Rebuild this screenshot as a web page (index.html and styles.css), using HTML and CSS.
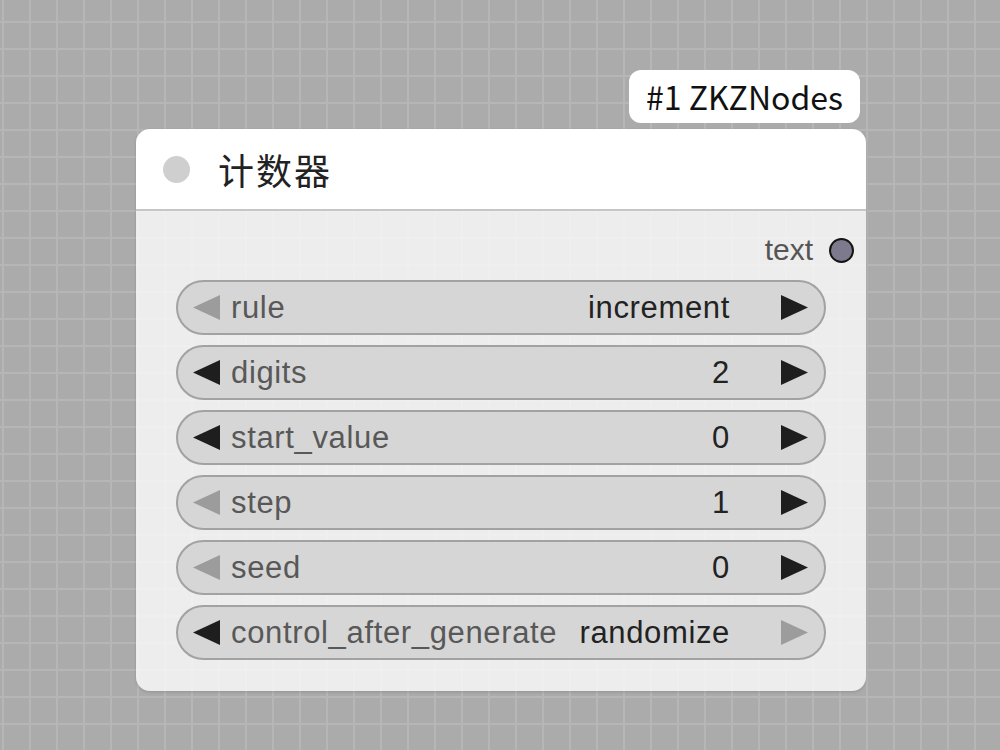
FILE: index.html
```html
<!DOCTYPE html>
<html lang="zh">
<head>
<meta charset="utf-8">
<title>计数器</title>
<link rel="stylesheet" href="styles.css">
</head>
<body>
<div class="canvas">
  <div class="node-wrap">
    <div class="badge">#1 ZKZNodes</div>
    <div class="node">
      <div class="node-title">
        <span class="dot"></span>
        <span class="title">计数器</span>
      </div>
      <div class="node-body">
        <div class="output">
          <span class="output-label">text</span>
          <span class="slot"></span>
        </div>
        <div class="widgets">
          <div class="widget">
            <svg class="arrow off" viewBox="0 0 27 25"><polygon points="0,12.5 27,0 27,25"/></svg>
            <span class="label">rule</span>
            <span class="value">increment</span>
            <svg class="arrow right" viewBox="0 0 27 25"><polygon points="27,12.5 0,0 0,25"/></svg>
          </div>
          <div class="widget">
            <svg class="arrow" viewBox="0 0 27 25"><polygon points="0,12.5 27,0 27,25"/></svg>
            <span class="label">digits</span>
            <span class="value">2</span>
            <svg class="arrow right" viewBox="0 0 27 25"><polygon points="27,12.5 0,0 0,25"/></svg>
          </div>
          <div class="widget">
            <svg class="arrow" viewBox="0 0 27 25"><polygon points="0,12.5 27,0 27,25"/></svg>
            <span class="label">start_value</span>
            <span class="value">0</span>
            <svg class="arrow right" viewBox="0 0 27 25"><polygon points="27,12.5 0,0 0,25"/></svg>
          </div>
          <div class="widget">
            <svg class="arrow off" viewBox="0 0 27 25"><polygon points="0,12.5 27,0 27,25"/></svg>
            <span class="label">step</span>
            <span class="value">1</span>
            <svg class="arrow right" viewBox="0 0 27 25"><polygon points="27,12.5 0,0 0,25"/></svg>
          </div>
          <div class="widget">
            <svg class="arrow off" viewBox="0 0 27 25"><polygon points="0,12.5 27,0 27,25"/></svg>
            <span class="label">seed</span>
            <span class="value">0</span>
            <svg class="arrow right" viewBox="0 0 27 25"><polygon points="27,12.5 0,0 0,25"/></svg>
          </div>
          <div class="widget">
            <svg class="arrow" viewBox="0 0 27 25"><polygon points="0,12.5 27,0 27,25"/></svg>
            <span class="label">control_after_generate</span>
            <span class="value">randomize</span>
            <svg class="arrow right off" viewBox="0 0 27 25"><polygon points="27,12.5 0,0 0,25"/></svg>
          </div>
        </div>
      </div>
    </div>
  </div>
</div>
</body>
</html>
```
FILE: styles.css
```css
html, body {
  margin: 0;
  padding: 0;
}

.canvas {
  width: 1000px;
  height: 750px;
  box-sizing: border-box;
  padding: 70px 0 0 136px;
  background-color: #ababab;
  background-image:
    linear-gradient(to right, #b6b6b6 0, #b6b6b6 2px, transparent 2px),
    linear-gradient(to bottom, #b6b6b6 0, #b6b6b6 2px, transparent 2px);
  background-size: 27px 27px;
  background-position: 2px 21px;
  overflow: hidden;
}

.node-wrap {
  width: 730px;
  display: flex;
  flex-direction: column;
}

.badge {
  align-self: flex-end;
  margin-right: 6px;
  margin-bottom: 6px;
  height: 53px;
  line-height: 53px;
  padding: 0 17px;
  background: #ffffff;
  border-radius: 12px;
  font-family: "Noto Sans CJK SC", "Noto Sans", sans-serif;
  font-size: 32px;
  color: #111111;
}

.node {
  height: 562px;
  border-radius: 14px;
  overflow: hidden;
  display: flex;
  flex-direction: column;
  box-shadow: 0 1px 3px rgba(0, 0, 0, 0.15);
}

.node-title {
  height: 80px;
  flex: none;
  background: #ffffff;
  border-bottom: 2px solid #c6c6c6;
  display: flex;
  align-items: center;
  padding-left: 27px;
}

.dot {
  width: 27px;
  height: 27px;
  border-radius: 50%;
  background: #cfcfcf;
  margin-right: 28px;
}

.title {
  font-family: "Noto Sans CJK SC", sans-serif;
  font-size: 36px;
  color: #222222;
  letter-spacing: 2px;
}

.node-body {
  flex: 1;
  background: rgba(255, 255, 255, 0.78);
  display: flex;
  flex-direction: column;
}

.output {
  margin-top: 24px;
  height: 30px;
  display: flex;
  justify-content: flex-end;
  align-items: center;
  padding-right: 12px;
}

.output-label {
  font-family: "Liberation Sans", Arial, sans-serif;
  font-size: 30px;
  line-height: 30px;
  color: #555555;
  margin-right: 16px;
}

.slot {
  width: 21px;
  height: 21px;
  border-radius: 50%;
  background: #7c7a8c;
  border: 2.5px solid #141414;
}

.widgets {
  margin-top: 15px;
  padding: 0 40px;
  display: flex;
  flex-direction: column;
  gap: 10px;
}

.widget {
  height: 55px;
  box-sizing: border-box;
  border: 2px solid #a2a2a2;
  border-radius: 28px;
  background: #d6d6d6;
  display: flex;
  align-items: center;
  padding: 0 16px 0 15px;
  font-family: "Liberation Sans", Arial, sans-serif;
  font-size: 31px;
  letter-spacing: 0.65px;
}

.arrow {
  width: 27px;
  height: 25px;
  flex: none;
  fill: #1e1e1e;
}

.arrow.off {
  fill: #9c9c9c;
}

.label {
  margin-left: 11px;
  color: #585858;
}

.value {
  margin-left: auto;
  color: #222222;
}

.arrow.right {
  margin-left: 51px;
}
```
